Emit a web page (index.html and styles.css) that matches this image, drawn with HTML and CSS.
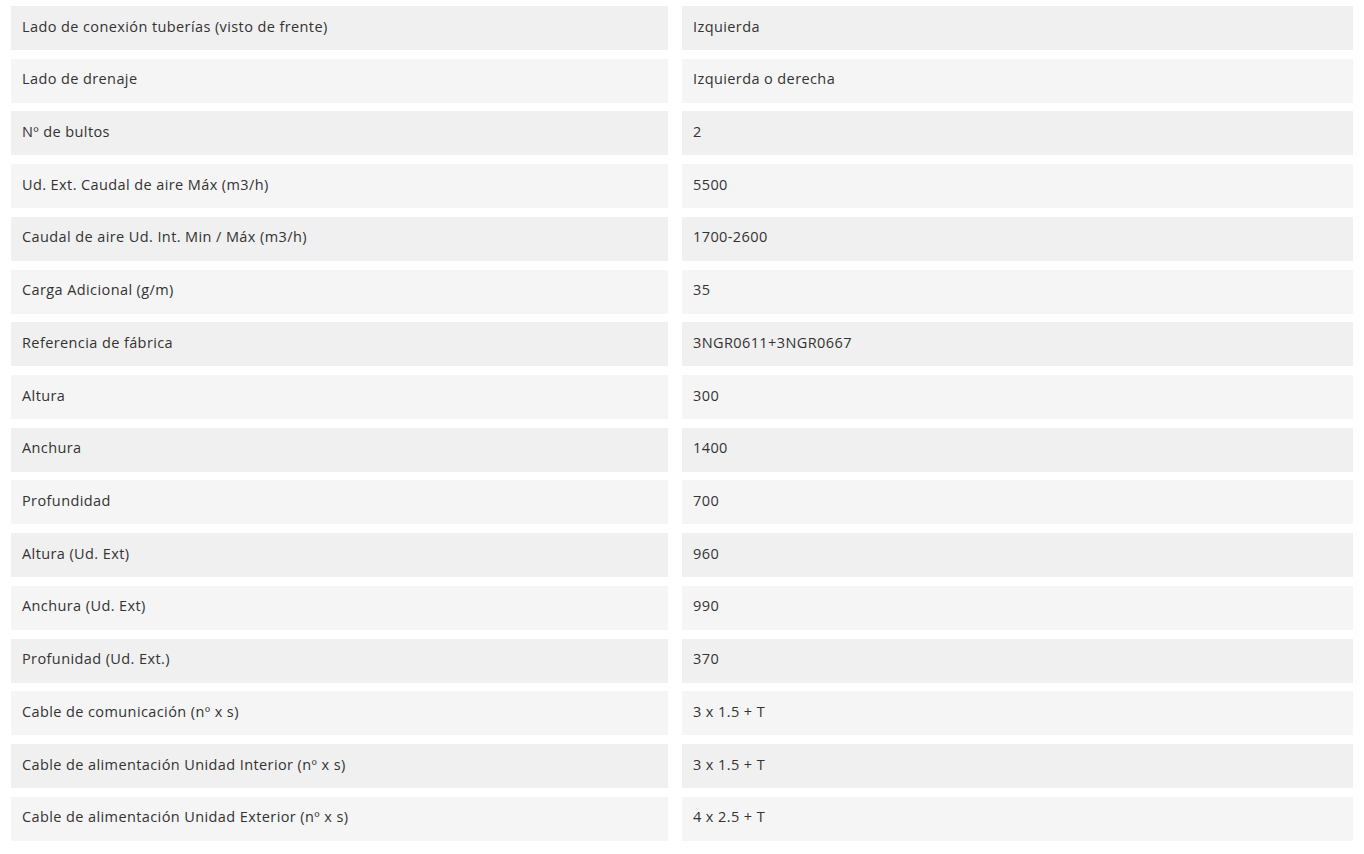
FILE: index.html
```html
<!DOCTYPE html>
<html lang="es">
<head>
<meta charset="utf-8">
<link rel="stylesheet" href="styles.css">
</head>
<body>
<div class="specs">
  <div class="row"><div class="cell">Lado de conexión tuberías (visto de frente)</div><div class="cell">Izquierda</div></div>
  <div class="row"><div class="cell">Lado de drenaje</div><div class="cell">Izquierda o derecha</div></div>
  <div class="row"><div class="cell">Nº de bultos</div><div class="cell">2</div></div>
  <div class="row"><div class="cell">Ud. Ext. Caudal de aire Máx (m3/h)</div><div class="cell">5500</div></div>
  <div class="row"><div class="cell">Caudal de aire Ud. Int. Min / Máx (m3/h)</div><div class="cell">1700-2600</div></div>
  <div class="row"><div class="cell">Carga Adicional (g/m)</div><div class="cell">35</div></div>
  <div class="row"><div class="cell">Referencia de fábrica</div><div class="cell">3NGR0611+3NGR0667</div></div>
  <div class="row"><div class="cell">Altura</div><div class="cell">300</div></div>
  <div class="row"><div class="cell">Anchura</div><div class="cell">1400</div></div>
  <div class="row"><div class="cell">Profundidad</div><div class="cell">700</div></div>
  <div class="row"><div class="cell">Altura (Ud. Ext)</div><div class="cell">960</div></div>
  <div class="row"><div class="cell">Anchura (Ud. Ext)</div><div class="cell">990</div></div>
  <div class="row"><div class="cell">Profunidad (Ud. Ext.)</div><div class="cell">370</div></div>
  <div class="row"><div class="cell">Cable de comunicación (nº x s)</div><div class="cell">3 x 1.5 + T</div></div>
  <div class="row"><div class="cell">Cable de alimentación Unidad Interior (nº x s)</div><div class="cell">3 x 1.5 + T</div></div>
  <div class="row"><div class="cell">Cable de alimentación Unidad Exterior (nº x s)</div><div class="cell">4 x 2.5 + T</div></div>
</div>
</body>
</html>
```

FILE: styles.css
```css
html, body {
  margin: 0;
  padding: 0;
  background: #ffffff;
}
body {
  font-family: "Open Sans", "Liberation Sans", sans-serif;
  font-size: 14.5px;
  letter-spacing: 0.4px;
  color: #333333;
}
.specs {
  display: flex;
  flex-direction: column;
  gap: 8.73px;
  padding: 6px 11px 0 11px;
}
.row {
  display: grid;
  grid-template-columns: 657px 671px;
  column-gap: 14px;
  height: 44px;
}
.cell {
  display: flex;
  align-items: center;
  padding: 0 11px 4px 11px;
  background: #f0f0f0;
  white-space: nowrap;
}
.row:nth-child(even) .cell {
  background: #f5f5f5;
}
```
